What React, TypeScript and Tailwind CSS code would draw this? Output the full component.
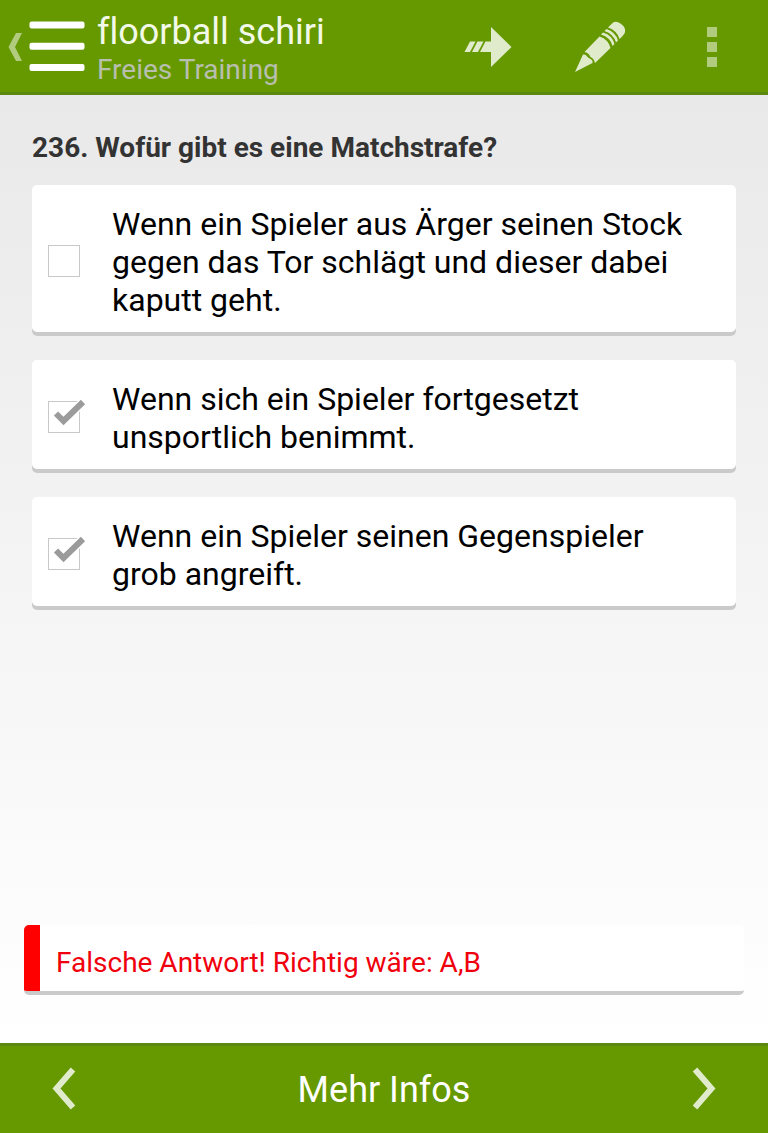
import React, { useState } from 'react';

interface Answer {
  id: string;
  text: string;
  checked: boolean;
}

const initialAnswers: Answer[] = [
  { id: 'a', text: 'Wenn ein Spieler aus Ärger seinen Stock gegen das Tor schlägt und dieser dabei kaputt geht.', checked: false },
  { id: 'b', text: 'Wenn sich ein Spieler fortgesetzt unsportlich benimmt.', checked: true },
  { id: 'c', text: 'Wenn ein Spieler seinen Gegenspieler grob angreift.', checked: true }
];

function Header() {
  return (
    <header className="flex h-[95px] border-b-3 border-[#5c8710] bg-[#669900]">
      <button aria-label="Menü" className="flex w-[97px] shrink-0 items-center">
        <svg width="97" height="92" viewBox="0 0 97 92">
          <path d="M16 33H22L15 47L22 61H16L8.500 47Z" fill="#b2cc7f" />
          <rect x="29.500" y="21.500" width="55" height="7" rx="2" fill="#fff" />
          <rect x="29.500" y="42.700" width="55" height="7" rx="2" fill="#fff" />
          <rect x="29.500" y="64" width="55" height="7" rx="2" fill="#fff" />
        </svg>
      </button>

      <div className="min-w-0 flex-1 pt-3">
        <h1 className="truncate text-4xl leading-10 text-[#f3f9e8]">floorball schiri</h1>
        <p className="truncate text-[28px] leading-9 text-[#b8bfae]">Freies Training</p>
      </div>

      <nav className="flex shrink-0">
        <button aria-label="Überspringen" className="flex w-28 items-center justify-center">
          <svg width="56" height="56" viewBox="0 0 56 56" fill="#e0ebcc">
            <path d="M31 9L51.500 29L31 49V34H20L25.500 23.500H31Z" />
            <path d="M10 23.500H15.500L10 34H4.500Z" />
            <path d="M17.500 23.500H23.500L18 34H12Z" />
          </svg>
        </button>
        <button aria-label="Bearbeiten" className="flex w-28 items-center justify-center">
          <svg width="56" height="56" viewBox="0 0 56 56" fill="#e0ebcc">
            {/* tip */}
            <path d="M3 54L11 36.500Q14 36 15 38.500Q17 40 18.500 41Q21 42 20.500 45Z" />
            {/* shaft */}
            <path d="M12.500 34L27.500 18.500Q36.500 21.500 38.500 30L23 45Q22 40.500 18.500 39Q16.500 34.500 12.500 34Z" />
            {/* ferrule */}
            <path d="M29 16.500L31 14.500Q40.500 17.500 42.500 26L40.500 28Q38.500 19.500 29 16.500Z" />
            <path d="M32.500 13L34.500 11Q43.500 14 46 22.500L44 24.500Q41.500 16 32.500 13Z" />
            {/* eraser */}
            <path d="M36 9.500L39.500 6Q43 2 48.500 5.500Q54 9.500 53 14Q52.500 16.500 47.500 21Q45 12.500 36 9.500Z" />
          </svg>
        </button>
        <button aria-label="Mehr Optionen" className="flex w-28 items-center justify-center">
          <svg width="10" height="42" viewBox="0 0 10 42" fill="#b2cc7f">
            <rect y="2" width="10" height="10" />
            <rect y="17" width="10" height="10" />
            <rect y="32" width="10" height="10" />
          </svg>
        </button>
      </nav>
    </header>
  );
}

function AnswerCard({ answer, onToggle }: { answer: Answer; onToggle: () => void }) {
  return (
    <label
      htmlFor={answer.id}
      className="flex cursor-pointer items-center gap-8 rounded-[5px] bg-white pr-8 pl-4 shadow-[inset_0_-4px_0_#cacaca]"
    >
      <span className="relative h-8 w-8 shrink-0">
        <input
          id={answer.id}
          type="checkbox"
          checked={answer.checked}
          onChange={onToggle}
          className="block h-8 w-8 appearance-none border border-[#c8c8c8] bg-white"
        />
        {answer.checked && (
          <svg className="pointer-events-none absolute -top-1 left-0" width="40" height="36" viewBox="0 0 40 36">
            <path d="M8 16.500L15.500 24L35 5" fill="none" stroke="#fff" strokeWidth="9" />
            <path d="M8 16.500L15.500 24L35 5" fill="none" stroke="#9b9b9b" strokeWidth="6" />
          </svg>
        )}
      </span>
      <span className="pt-5 pb-[17px] text-[32px] leading-[38px] text-black">{answer.text}</span>
    </label>
  );
}

export default function App() {
  const [answers, setAnswers] = useState(initialAnswers);

  const toggle = (id: string) => {
    setAnswers(answers.map((a) => (a.id === id ? { ...a, checked: !a.checked } : a)));
  };

  return (
    <div className="flex min-h-screen flex-col font-[Roboto,sans-serif] [font-variant-ligatures:none]">
      <Header />

      <main className="flex flex-1 flex-col bg-linear-to-b from-[#e9e9e9] to-white pb-12">
        <fieldset className="px-8 pt-[34px]">
          <legend className="float-left mb-[18px] w-full text-[28px] leading-[38px] font-bold text-[#333]">
            236. Wofür gibt es eine Matchstrafe?
          </legend>
          <div className="clear-both flex flex-col gap-6">
            {answers.map((answer) => (
              <AnswerCard key={answer.id} answer={answer} onToggle={() => toggle(answer.id)} />
            ))}
          </div>
        </fieldset>

        <div className="mx-6 mt-auto overflow-hidden rounded-[5px] border-b-4 border-[#cacaca] bg-white">
          <p role="status" className="border-l-16 border-[#ff0000] px-4 pt-5 pb-[10px] text-[28px] leading-9 text-[#f0000c]">
            Falsche Antwort! Richtig wäre: A,B
          </p>
        </div>
      </main>

      <footer className="flex h-[90px] border-t-3 border-[#5c8710] bg-[#669900]">
        <button aria-label="Zurück" className="flex w-32 items-center justify-center">
          <svg width="24" height="48" viewBox="0 0 24 48" fill="none" stroke="#e0ebcc" strokeWidth="6">
            <path d="M21 3.500L4.500 22.500L21 41.500" />
          </svg>
        </button>
        <button className="flex-1 text-4xl text-white">Mehr Infos</button>
        <button aria-label="Weiter" className="flex w-32 items-center justify-center">
          <svg width="24" height="48" viewBox="0 0 24 48" fill="none" stroke="#e0ebcc" strokeWidth="6">
            <path d="M3 3.500L19.500 22.500L3 41.500" />
          </svg>
        </button>
      </footer>
    </div>
  );
}
